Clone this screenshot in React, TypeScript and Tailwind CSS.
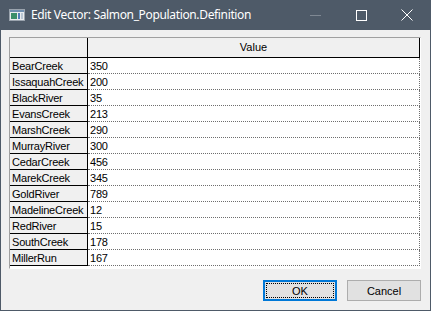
import React from "react";

const ROWS: [string, string][] = [
  ["BearCreek", "350"],
  ["IssaquahCreek", "200"],
  ["BlackRiver", "35"],
  ["EvansCreek", "213"],
  ["MarshCreek", "290"],
  ["MurrayRiver", "300"],
  ["CedarCreek", "456"],
  ["MarekCreek", "345"],
  ["GoldRiver", "789"],
  ["MadelineCreek", "12"],
  ["RedRiver", "15"],
  ["SouthCreek", "178"],
  ["MillerRun", "167"],
];

function AppIcon() {
  return (
    <svg width="16" height="12" viewBox="0 0 16 12" className="shrink-0">
      <rect x="0.5" y="0.5" width="15" height="11" fill="#e8ecef" stroke="#9aa3ad" />
      <rect x="1" y="1" width="14" height="2" fill="#6f8fb0" />
      <rect x="2" y="4" width="6" height="6" fill="#3a8f6a" />
      <rect x="9" y="4" width="2" height="6" fill="#4f7fb8" />
      <rect x="12" y="4" width="2" height="6" fill="#b9c6d3" />
    </svg>
  );
}

export default function App() {
  return (
    <div
      className="w-[431px] h-[311px] bg-[#4e5a68] flex flex-col px-px pb-px"
      style={{ fontFamily: "'Liberation Sans', Arial, sans-serif" }}
    >
      {/* Title bar */}
      <div className="h-[30px] flex items-center pl-[8px] text-white shrink-0">
        <AppIcon />
        <span
          className="ml-[6px] text-[12px] tracking-[-0.35px]"
          style={{ fontFamily: "'Noto Sans', sans-serif" }}
        >
          Edit Vector: Salmon_Population.Definition
        </span>
        <div className="ml-auto flex items-center h-full">
          <div className="w-[46px] h-full flex items-center justify-center">
            <div className="w-[11px] h-px bg-[#7f8893]" />
          </div>
          <div className="w-[46px] h-full flex items-center justify-center">
            <div className="w-[11px] h-[11px] border border-white" />
          </div>
          <div className="w-[46px] h-full flex items-center justify-center">
            <svg width="12" height="12" viewBox="0 0 12 12">
              <path d="M0.5 0.5 L11.5 11.5 M11.5 0.5 L0.5 11.5" stroke="white" strokeWidth="1" />
            </svg>
          </div>
        </div>
      </div>

      {/* Body */}
      <div className="flex-1 bg-[#f0f0f0] flex flex-col pt-[7px] pl-[8px] pr-[9px]">
        <div className="h-[232px] border border-t-[#a0a0a0] border-l-[#a0a0a0] border-r-white border-b-white bg-white overflow-hidden">
          <div className="flex h-[20px] bg-[#f0f0f0] border-b border-black w-[410px]">
            <div className="w-[78px] border-r border-black" />
            <div className="flex-1 flex items-center justify-center text-[11px] text-black border-r border-black">
              Value
            </div>
          </div>
          {ROWS.map(([name, value]) => (
            <div key={name} className="flex h-[16px] w-[410px] text-[11px] leading-[16px] tracking-[-0.2px] text-black">
              <div className="w-[78px] bg-[#f0f0f0] border-r border-b border-black pl-[2px]">
                {name}
              </div>
              <div className="flex-1 border-b border-r border-dotted border-[#6e6e6e] pl-[2px]">
                {value}
              </div>
            </div>
          ))}
        </div>

        <div className="flex justify-end gap-[10px] mt-[11px]">
          <div className="w-[74px] h-[21px] border-2 border-[#0078d7] bg-[#e1e1e1] p-px">
            <div className="w-full h-full border border-dotted border-black flex items-center justify-center pt-px text-[11px] text-black">
              OK
            </div>
          </div>
          <div className="w-[74px] h-[21px] border border-[#adadad] bg-[#e1e1e1] flex items-center justify-center pt-px text-[11px] text-black">
            Cancel
          </div>
        </div>
      </div>
    </div>
  );
}
